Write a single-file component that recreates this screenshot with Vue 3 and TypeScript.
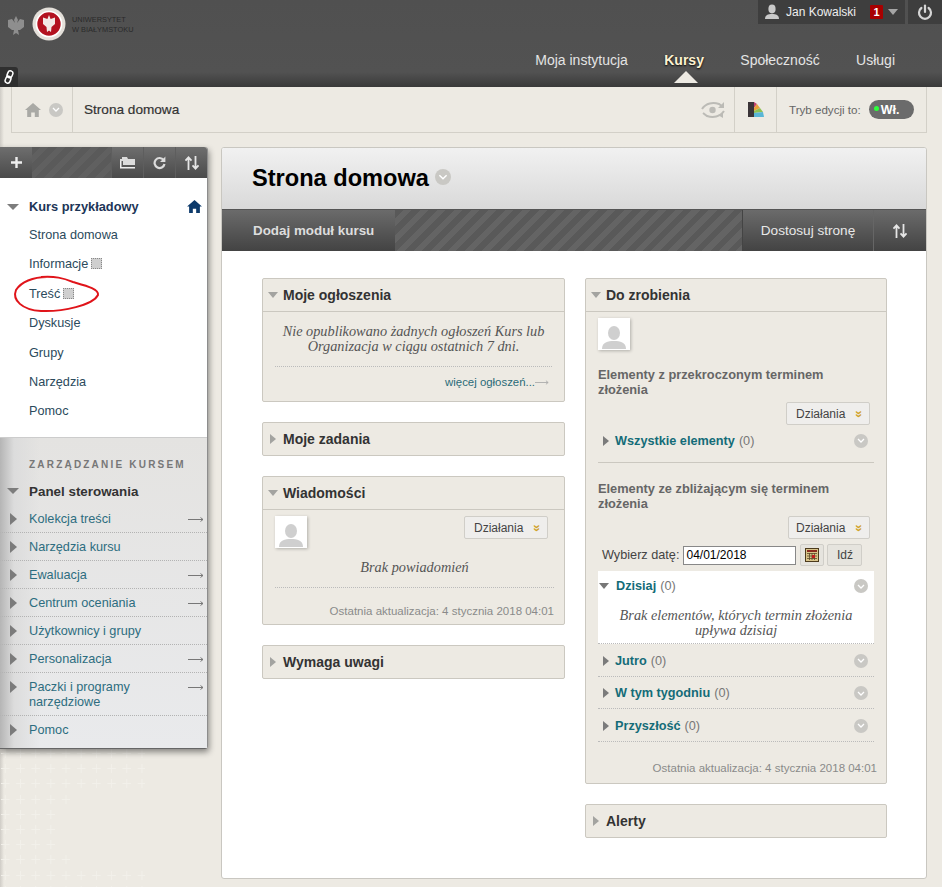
<script setup lang="ts">
interface ManageItem {
  label: string
  arrow: boolean
}

const courseLinks = [
  { label: "Strona domowa", badge: false },
  { label: "Informacje", badge: true },
  { label: "Treść", badge: true },
  { label: "Dyskusje", badge: false },
  { label: "Grupy", badge: false },
  { label: "Narzędzia", badge: false },
  { label: "Pomoc", badge: false }
];

const manageItems: ManageItem[] = [
  { label: "Kolekcja treści", arrow: true },
  { label: "Narzędzia kursu", arrow: false },
  { label: "Ewaluacja", arrow: true },
  { label: "Centrum oceniania", arrow: true },
  { label: "Użytkownicy i grupy", arrow: false },
  { label: "Personalizacja", arrow: true },
  { label: "Paczki i programy narzędziowe", arrow: true },
  { label: "Pomoc", arrow: false }
];

const navItems = ["Moja instytucja", "Kursy", "Społeczność", "Usługi"];
const laterRows = ["Jutro", "W tym tygodniu", "Przyszłość"];

// widths of the fading plus pattern under the side menu
const plusRows = [145, 145, 145, 70, 55, 55, 55, 70, 145, 145];
</script>

<template>
  <div class="page">
    <header class="topbar">
      <div class="logo">
        <svg class="eagle" width="18" height="22" viewBox="0 0 18 22">
          <path d="M9 1 L11 5 L10 8 L13 4 L17 5 L17 12 L13 15 L11 15 L12 20 L9 18 L6 20 L7 15 L5 15 L1 12 L1 5 L5 4 L8 8 L7 5 Z" fill="#8e8e8e" />
        </svg>
        <svg class="seal" width="34" height="34" viewBox="0 0 34 34">
          <circle cx="17" cy="17" r="16.5" fill="#e4e0da" />
          <circle cx="17" cy="17" r="12.5" fill="#b31220" stroke="#fff" stroke-width="1.6" />
          <path d="M17 8 L18.6 12 L23 10.5 L23 17 L19.5 20 L19 25 L17 23.5 L15 25 L14.5 20 L11 17 L11 10.5 L15.4 12 Z" fill="#f3e9e6" />
        </svg>
        <div class="logo-text">UNIWERSYTET<br>W BIAŁYMSTOKU</div>
      </div>
      <div class="top-right">
        <div class="account">
          <div class="userbox">
            <svg width="16" height="16" viewBox="0 0 16 16">
              <ellipse cx="8" cy="5" rx="3.6" ry="4.4" fill="#c9c9c9" />
              <path d="M1 15 C1 11 4 10 8 10 C12 10 15 11 15 15 Z" fill="#c9c9c9" />
            </svg>
            <span class="username">Jan Kowalski</span>
            <span class="count">1</span>
            <span class="user-caret"></span>
          </div>
          <div class="powerbox">
            <svg width="16" height="16" viewBox="0 0 16 16" fill="none" stroke="#d6d6d6" stroke-width="2.2" stroke-linecap="round">
              <path d="M8 1.5 V8" />
              <path d="M4.4 4 A6 6 0 1 0 11.6 4" />
            </svg>
          </div>
        </div>
        <nav class="mainnav">
          <a v-for="item in navItems" :key="item" :class="['navlink', { active: item === 'Kursy' }]">{{ item }}</a>
        </nav>
      </div>
      <div class="linktab">
        <svg width="12" height="14" viewBox="0 0 12 14" fill="none" stroke="#fff" stroke-width="1.5">
          <rect x="4.6" y="0.8" width="5" height="7" rx="2.4" transform="rotate(22 7 4)" />
          <rect x="2.4" y="6.2" width="5" height="7" rx="2.4" transform="rotate(22 5 10)" />
        </svg>
      </div>
    </header>

    <div class="crumbs">
      <div class="crumb-home">
        <svg width="16" height="14" viewBox="0 0 16 14">
          <path d="M8 0 L16 7 L13.8 7 L13.8 14 L9.8 14 L9.8 9.5 L6.2 9.5 L6.2 14 L2.2 14 L2.2 7 L0 7 Z" fill="#a9a9a5" />
        </svg>
        <span class="chev"><svg width="8" height="5" viewBox="0 0 8 5"><path d="M1 1 L4 4 L7 1" fill="none" stroke="#fff" stroke-width="1.3" /></svg></span>
      </div>
      <div class="crumb-title">Strona domowa</div>
      <div class="crumb-tool">
        <svg width="26" height="20" viewBox="0 0 26 20" fill="none" stroke="#bcbbb6" stroke-width="2">
          <path d="M2 9 C6 3 13 2 19 4 L23 7" />
          <path d="M24 11 C20 17 13 18 7 16 L3 13" />
          <circle cx="12.5" cy="10" r="3.2" fill="#bcbbb6" stroke="none" />
          <path d="M24 2 V8 H18 Z" fill="#bcbbb6" stroke="none" />
          <path d="M23 13 V18 L18 15 Z" fill="#bcbbb6" stroke="none" />
        </svg>
      </div>
      <div class="crumb-palette">
        <svg width="16" height="15" viewBox="0 0 16 15">
          <rect x="0" y="0" width="6" height="15" fill="#3b3438" />
          <path d="M6 0 L9 2 L6 6 Z" fill="#c2436e" />
          <path d="M6 6 L9 2 L12 6 L6 9 Z" fill="#e8a13a" />
          <path d="M6 9 L12 6 L15 10 L6 11 Z" fill="#8cc152" />
          <path d="M6 11 L15 10 L16 15 L6 15 Z" fill="#59b6d6" />
        </svg>
      </div>
      <div class="crumb-edit">
        <span>Tryb edycji to:</span>
        <span class="toggle"><i class="led"></i>Wł.</span>
      </div>
    </div>

    <div class="body-row">
      <div class="side-col">
        <aside class="sidemenu">
          <div class="side-tools">
            <span class="tool plus">
              <svg width="11" height="11" viewBox="0 0 11 11"><path d="M5.5 0 V11 M0 5.5 H11" stroke="#eee" stroke-width="2.4" /></svg>
            </span>
            <span class="tool-stripes"></span>
            <span class="tool">
              <svg width="16" height="13" viewBox="0 0 16 13">
                <path d="M0 3 H2 V1 H7 L8 3 H15 V9 H3 V5 H0 Z" fill="#dcdcdc" />
                <path d="M0 5 H1.5 V11 H15 V12.5 H0 Z" fill="#eee" />
              </svg>
            </span>
            <span class="tool">
              <svg width="13" height="14" viewBox="0 0 13 14" fill="none">
                <path d="M10.6 4 A5 5 0 1 0 11.5 8" stroke="#dcdcdc" stroke-width="2.2" />
                <path d="M12.4 0.5 V6 H7 Z" fill="#dcdcdc" />
              </svg>
            </span>
            <span class="tool">
              <svg width="14" height="14" viewBox="0 0 14 14" fill="none" stroke="#e6e6e6" stroke-width="1.8">
                <path d="M3.5 14 V2 M0.5 4.6 L3.5 1.4 L6.5 4.6" />
                <path d="M10.5 0 V12 M7.5 9.4 L10.5 12.6 L13.5 9.4" />
              </svg>
            </span>
          </div>

          <div class="course">
            <div class="course-head">
              <span class="tri-down big"></span>
              <span class="course-name">Kurs przykładowy</span>
              <svg class="course-home" width="15" height="13" viewBox="0 0 16 14">
                <path d="M8 0 L16 7 L13.8 7 L13.8 14 L9.8 14 L9.8 9.5 L6.2 9.5 L6.2 14 L2.2 14 L2.2 7 L0 7 Z" fill="#0d3a6b" />
              </svg>
            </div>
            <a v-for="link in courseLinks" :key="link.label" class="course-link">
              {{ link.label }}<i v-if="link.badge" class="badge"></i>
            </a>
          </div>

          <div class="manage">
            <div class="manage-title">ZARZĄDZANIE KURSEM</div>
            <div class="panel-head">
              <span class="tri-down big"></span>
              <span>Panel sterowania</span>
            </div>
            <div v-for="item in manageItems" :key="item.label" class="manage-row">
              <span class="tri-right dark"></span>
              <a class="manage-link">{{ item.label }}</a>
              <svg v-if="item.arrow" class="thin-arrow" width="16" height="5" viewBox="0 0 16 5" fill="none" stroke="#777">
                <path d="M0 2.5 H15 M12.5 0.5 L15 2.5 L12.5 4.5" />
              </svg>
            </div>
          </div>

          <svg class="ink-mark" width="90" height="38" viewBox="0 0 90 38" fill="none">
            <path d="M36 2 C22 2 10 7 5 15 C1 25 11 35 30 36 C52 37 82 30 87 20 C88 14 76 11 62 7 C52 3 44 1 30 2" stroke="#e0141a" stroke-width="2" />
          </svg>
        </aside>
        <div class="plus-field">
          <div v-for="(w, i) in plusRows" :key="i" class="plus-row" :style="{ width: w + 'px' }"></div>
        </div>
      </div>

      <main class="content">
        <div class="title-band">
          <h1>Strona domowa</h1>
          <span class="chev large"><svg width="10" height="6" viewBox="0 0 8 5"><path d="M1 1 L4 4 L7 1" fill="none" stroke="#fff" stroke-width="1.2" /></svg></span>
        </div>
        <div class="action-bar">
          <a class="action add">Dodaj moduł kursu</a>
          <span class="action-stripes"></span>
          <a class="action custom">Dostosuj stronę</a>
          <a class="action sort">
            <svg width="14" height="14" viewBox="0 0 14 14" fill="none" stroke="#e6e6e6" stroke-width="1.8">
              <path d="M3.5 14 V2 M0.5 4.6 L3.5 1.4 L6.5 4.6" />
              <path d="M10.5 0 V12 M7.5 9.4 L10.5 12.6 L13.5 9.4" />
            </svg>
          </a>
        </div>

        <div class="columns">
          <div class="column">
            <section class="module">
              <div class="mod-head open"><span class="tri-down"></span>Moje ogłoszenia</div>
              <div class="mod-body notes">
                <p class="serif-note">Nie opublikowano żadnych ogłoszeń Kurs lub Organizacja w ciągu ostatnich 7 dni.</p>
                <div class="more-row">
                  <a class="more">więcej ogłoszeń...</a>
                  <svg width="14" height="5" viewBox="0 0 16 5" fill="none" stroke="#aaa"><path d="M0 2.5 H15 M12.5 0.5 L15 2.5 L12.5 4.5" /></svg>
                </div>
              </div>
            </section>

            <section class="module">
              <div class="mod-head"><span class="tri-right"></span>Moje zadania</div>
            </section>

            <section class="module">
              <div class="mod-head open"><span class="tri-down"></span>Wiadomości</div>
              <div class="mod-body messages">
                <div class="msg-top">
                  <div class="avatar">
                    <svg width="26" height="26" viewBox="0 0 26 26">
                      <ellipse cx="13" cy="9" rx="6" ry="7" fill="#cfcfcf" />
                      <path d="M1 25 C1 18 7 17 13 17 C19 17 25 18 25 25 Z" fill="#cfcfcf" />
                    </svg>
                  </div>
                  <button class="actions-btn">Działania<span class="dbl">»</span></button>
                </div>
                <p class="serif-note one">Brak powiadomień</p>
                <div class="updated">Ostatnia aktualizacja: 4 stycznia 2018 04:01</div>
              </div>
            </section>

            <section class="module">
              <div class="mod-head"><span class="tri-right"></span>Wymaga uwagi</div>
            </section>
          </div>

          <div class="column">
            <section class="module">
              <div class="mod-head open"><span class="tri-down"></span>Do zrobienia</div>
              <div class="mod-body todo">
                <div class="avatar">
                  <svg width="26" height="26" viewBox="0 0 26 26">
                    <ellipse cx="13" cy="9" rx="6" ry="7" fill="#cfcfcf" />
                    <path d="M1 25 C1 18 7 17 13 17 C19 17 25 18 25 25 Z" fill="#cfcfcf" />
                  </svg>
                </div>
                <h4 class="todo-head first">Elementy z przekroczonym terminem złożenia</h4>
                <div class="btn-line"><button class="actions-btn">Działania<span class="dbl">»</span></button></div>
                <div class="todo-row all">
                  <span class="tri-right dark"></span>
                  <a class="todo-link">Wszystkie elementy</a><span class="zero">(0)</span>
                  <span class="chev end"><svg width="8" height="5" viewBox="0 0 8 5"><path d="M1 1 L4 4 L7 1" fill="none" stroke="#fff" stroke-width="1.3" /></svg></span>
                </div>
                <h4 class="todo-head">Elementy ze zbliżającym się terminem złożenia</h4>
                <div class="btn-line"><button class="actions-btn narrow">Działania<span class="dbl">»</span></button></div>
                <div class="date-line">
                  <label>Wybierz datę:</label>
                  <input class="date-input" value="04/01/2018" readonly>
                  <button class="small-btn cal">
                    <svg width="14" height="14" viewBox="0 0 14 14">
                      <rect x="0.5" y="0.5" width="13" height="13" fill="#d9c48a" stroke="#4d3b1d" />
                      <rect x="2" y="2" width="10" height="2" fill="#8a2b1e" />
                      <path d="M2 5.5 H12 M2 8 H12 M2 10.5 H12 M4.5 5 V12 M7 5 V12 M9.5 5 V12" stroke="#5a4a2a" stroke-width="0.8" />
                      <rect x="7" y="7" width="3" height="3" fill="#c11e1e" />
                    </svg>
                  </button>
                  <button class="small-btn go">Idź</button>
                </div>
                <div class="today">
                  <div class="today-head">
                    <span class="tri-down mid"></span>
                    <a class="todo-link">Dzisiaj</a><span class="zero">(0)</span>
                    <span class="chev end"><svg width="8" height="5" viewBox="0 0 8 5"><path d="M1 1 L4 4 L7 1" fill="none" stroke="#fff" stroke-width="1.3" /></svg></span>
                  </div>
                  <p class="serif-note today-note">Brak elementów, których termin złożenia upływa dzisiaj</p>
                </div>
                <div v-for="row in laterRows" :key="row" class="todo-row later">
                  <span class="tri-right dark"></span>
                  <a class="todo-link">{{ row }}</a><span class="zero">(0)</span>
                  <span class="chev end"><svg width="8" height="5" viewBox="0 0 8 5"><path d="M1 1 L4 4 L7 1" fill="none" stroke="#fff" stroke-width="1.3" /></svg></span>
                </div>
                <div class="updated todo-updated">Ostatnia aktualizacja: 4 stycznia 2018 04:01</div>
              </div>
            </section>

            <section class="module">
              <div class="mod-head"><span class="tri-right"></span>Alerty</div>
            </section>
          </div>
        </div>
      </main>
    </div>
  </div>
</template>

<style>
html, body {
  margin: 0;
  overflow: hidden;
  background: #edeae3;
}
</style>

<style scoped>
.page {
  position: relative;
  width: 942px;
  height: 887px;
  overflow: hidden;
  font-family: "Liberation Sans", Arial, sans-serif;
  background: linear-gradient(90deg, #cfccc6 0, #edeae3 4px);
}

p, h1, h4 { margin: 0; }

/* top bar */
.topbar {
  position: relative;
  height: 87px;
  display: flex;
  justify-content: space-between;
  background: linear-gradient(180deg, #505050 0, #525252 72px, #3a3a3a 87px);
}
.logo {
  display: flex;
  align-items: flex-start;
  padding: 7px 0 0 7px;
}
.eagle { margin-top: 8px; }
.seal { margin-left: 7px; }
.logo-text {
  margin: 8px 0 0 6px;
  font-size: 7.4px;
  line-height: 10px;
  color: #2a2a2a;
}
.top-right {
  display: flex;
  flex-direction: column;
  align-items: flex-end;
}
.account { display: flex; gap: 3px; }
.userbox {
  width: 147px;
  height: 24px;
  box-sizing: border-box;
  padding-left: 6px;
  display: flex;
  align-items: center;
  background: #3e3e3e;
}
.username {
  margin-left: 6px;
  font-size: 12px;
  color: #eee;
}
.count {
  width: 13px;
  height: 14px;
  margin-left: 14px;
  background: #a80000;
  border-radius: 1px;
  color: #fff;
  font-size: 11px;
  font-weight: 700;
  line-height: 14px;
  text-align: center;
}
.user-caret {
  margin-left: 5px;
  border-left: 5px solid transparent;
  border-right: 5px solid transparent;
  border-top: 6px solid #a5a5a5;
}
.powerbox {
  width: 34px;
  height: 24px;
  display: flex;
  align-items: center;
  justify-content: center;
  background: #3e3e3e;
}
.mainnav {
  display: flex;
  gap: 36.4px;
  padding: 28px 47px 0 0;
}
.navlink {
  position: relative;
  font-size: 14px;
  line-height: 16px;
  color: #e4e4e4;
}
.navlink.active {
  font-weight: 700;
  color: #fdf3d2;
  text-shadow: 0 1px 2px #000;
}
.navlink.active::after {
  content: "";
  position: absolute;
  left: 10px;
  top: 19px;
  border-left: 12px solid transparent;
  border-right: 12px solid transparent;
  border-bottom: 12px solid #edeae3;
}
.linktab {
  position: absolute;
  left: 0;
  bottom: 0;
  width: 18px;
  height: 20px;
  display: flex;
  align-items: center;
  justify-content: center;
  background: #2f2f2f;
  border-top-right-radius: 3px;
}

/* breadcrumb strip */
.crumbs {
  width: 916px;
  height: 46px;
  margin-left: 11px;
  box-sizing: border-box;
  display: flex;
  align-items: stretch;
  background: #edeae3;
  border: 1px solid #d3d0c8;
  border-top: 0;
}
.crumb-home {
  width: 61px;
  box-sizing: border-box;
  padding-left: 13px;
  display: flex;
  align-items: center;
  gap: 8px;
  border-right: 1px solid #d3d0c8;
}
.chev {
  flex: none;
  width: 14px;
  height: 14px;
  display: inline-flex;
  align-items: center;
  justify-content: center;
  border-radius: 50%;
  background: #c9c8c4;
}
.chev.large { width: 16px; height: 16px; margin: 5px 0 0 6px; }
.chev.end { margin-left: auto; margin-right: 6px; }
.crumb-title {
  flex: 1;
  padding-left: 11px;
  line-height: 45px;
  font-size: 13.6px;
  color: #333;
  -webkit-text-stroke: 0.2px #333;
}
.crumb-tool {
  width: 32px;
  padding-right: 8px;
  display: flex;
  align-items: center;
  justify-content: flex-end;
}
.crumb-palette {
  width: 41px;
  display: flex;
  align-items: center;
  justify-content: center;
  border-left: 1px solid #d3d0c8;
  border-right: 1px solid #d3d0c8;
}
.crumb-edit {
  width: 149px;
  box-sizing: border-box;
  padding-left: 12px;
  display: flex;
  align-items: center;
  gap: 8px;
  font-size: 11.6px;
  color: #666;
}
.toggle {
  width: 45px;
  height: 19px;
  box-sizing: border-box;
  padding-left: 5px;
  display: flex;
  align-items: center;
  gap: 2px;
  border-radius: 10px;
  background: #6b6b6b;
  color: #fff;
  font-size: 12.5px;
  font-weight: 700;
}
.led {
  width: 5px;
  height: 5px;
  margin-top: -3px;
  border-radius: 50%;
  background: #2dff3c;
}

/* page body */
.body-row {
  display: flex;
  gap: 13px;
  padding-top: 14px;
}
.side-col { width: 208px; flex: none; }
.sidemenu {
  position: relative;
  height: 602px;
  border-radius: 0 3px 3px 0;
  box-shadow: 1px 3px 6px rgba(0, 0, 0, 0.45);
  border-right: 1px solid #8d8d8d;
  border-bottom: 1px solid #666;
  box-sizing: border-box;
}
.side-tools {
  height: 31px;
  display: flex;
  background: linear-gradient(180deg, #6e6e6e 0, #4a4a4a 100%);
  border-radius: 0 3px 0 0;
}
.tool {
  width: 32px;
  flex: none;
  display: flex;
  align-items: center;
  justify-content: center;
  border-left: 1px solid #5e5e5e;
  box-sizing: border-box;
}
.tool.plus { border-left: 0; }
.tool-stripes {
  flex: 1;
  background: repeating-linear-gradient(135deg, #5a5a5a 0 6px, #606060 6px 12px);
}
.course {
  height: 260px;
  box-sizing: border-box;
  padding-top: 14px;
  background: #fff;
  border-bottom: 1px solid #ccc;
}
.course-head {
  height: 29px;
  display: flex;
  align-items: center;
  padding-left: 7px;
  font-size: 12.8px;
  font-weight: 700;
  color: #1c3557;
}
.course-name { margin-left: 10px; }
.course-home { margin-left: auto; margin-right: 5px; }
.course-link {
  display: block;
  height: 29.4px;
  padding-left: 29px;
  line-height: 29px;
  font-size: 12.7px;
  color: #2b4a5c;
}
.badge {
  display: inline-block;
  width: 9px;
  height: 9px;
  margin-left: 3px;
  vertical-align: -1px;
  background: #cfcfcf;
  border: 1px dotted #888;
}
.manage {
  height: 310px;
  box-sizing: border-box;
  padding-top: 21px;
  background:
    linear-gradient(90deg, #b5b5b5 0, #dcdcdc 14px, rgba(233, 234, 236, 0) 40px),
    linear-gradient(180deg, #e4e3e1, #e9eaec);
}
.manage-title {
  padding-left: 29px;
  font-size: 10px;
  font-weight: 700;
  line-height: 12px;
  letter-spacing: 2.2px;
  color: #777;
}
.panel-head {
  height: 22px;
  margin: 9px 0 3px;
  display: flex;
  align-items: center;
  gap: 10px;
  padding-left: 7px;
  font-size: 13.4px;
  font-weight: 700;
  color: #333;
}
.manage-row {
  display: flex;
  align-items: flex-start;
  min-height: 28px;
  box-sizing: border-box;
  padding: 7px 0 5px;
  border-bottom: 1px dotted #b3b3b3;
}
.manage-row:last-child { border-bottom: 0; }
.manage-row .tri-right {
  margin: 1px 0 0 10px;
  border-top-width: 6.5px;
  border-bottom-width: 6.5px;
  border-left-width: 7px;
}
.manage-link {
  width: 125px;
  margin-left: 12px;
  font-size: 12.7px;
  line-height: 15px;
  color: #2d6d80;
}
.thin-arrow {
  margin: 5px 3px 0 auto;
}
.ink-mark {
  position: absolute;
  left: 11px;
  top: 128px;
}
.tri-down {
  flex: none;
  display: inline-block;
  border-left: 5px solid transparent;
  border-right: 5px solid transparent;
  border-top: 6px solid #a3a3a0;
}
.tri-down.big {
  border-left-width: 6px;
  border-right-width: 6px;
  border-top: 6px solid #7d7d7d;
}
.tri-down.mid {
  border-left-width: 5.5px;
  border-right-width: 5.5px;
  border-top: 6px solid #777;
}
.tri-right {
  flex: none;
  display: inline-block;
  border-top: 5.5px solid transparent;
  border-bottom: 5.5px solid transparent;
  border-left: 6px solid #a3a3a0;
}
.tri-right.dark { border-left-color: #7b7b7b; }
.plus-row {
  height: 15.2px;
  background-image:
    linear-gradient(90deg, #f2f0ea 0 9px, transparent 9px),
    linear-gradient(90deg, transparent 4px, #f2f0ea 4px 5px, transparent 5px);
  background-repeat: repeat-x;
  background-size: 15.2px 1px, 15.2px 9px;
  background-position: 1px 4px, 1px 0;
}

/* main card */
.content {
  width: 706px;
  height: 732px;
  box-sizing: border-box;
  background: #fff;
  border: 1px solid #c9c7c1;
  border-radius: 3px;
  overflow: hidden;
}
.title-band {
  height: 62px;
  box-sizing: border-box;
  padding: 16px 0 0 30px;
  display: flex;
  align-items: flex-start;
  background: linear-gradient(180deg, #f1f1f1, #d9d9d9);
  border-bottom: 1px solid #555;
}
h1 {
  font-size: 23.6px;
  line-height: 28px;
  font-weight: 700;
  color: #000;
}
.action-bar {
  height: 41px;
  display: flex;
  background: #555;
  font-size: 13.6px;
  color: #e8e8e8;
}
.action {
  display: flex;
  align-items: center;
  justify-content: center;
  background: linear-gradient(180deg, #6b6b6b, #434343);
}
.action.add {
  width: 173px;
  box-sizing: border-box;
  padding-left: 31px;
  justify-content: flex-start;
  font-size: 13.4px;
  font-weight: 700;
  color: #ddd;
}
.action-stripes {
  flex: 1;
  background: repeating-linear-gradient(135deg, #595959 0 6px, #646464 6px 12px);
}
.action.custom {
  width: 131px;
  border-left: 1px solid #444;
  box-sizing: border-box;
}
.action.sort {
  width: 53px;
  border-left: 1px solid #666;
  box-sizing: border-box;
}
.columns {
  display: flex;
  gap: 20px;
  padding: 27px 0 0 40px;
}
.column {
  width: 303px;
  display: flex;
  flex-direction: column;
  gap: 20px;
}
.column + .column { width: 302px; }
.module {
  background: #edeae3;
  border: 1px solid #cbc8c0;
  border-radius: 2px;
}
.mod-head {
  height: 32px;
  box-sizing: border-box;
  padding-left: 5px;
  display: flex;
  align-items: center;
  gap: 5px;
  font-size: 14px;
  font-weight: 700;
  color: #333;
}
.mod-head.open { border-bottom: 1px solid #cbc8c0; height: 33px; }
.mod-head .tri-right { margin: 0 2px 0 2px; }
.mod-body { box-sizing: border-box; }
.serif-note {
  font-family: "Liberation Serif", "Times New Roman", serif;
  font-style: italic;
  font-size: 14.3px;
  line-height: 15px;
  color: #555;
  text-align: center;
}
.notes {
  height: 89px;
  padding: 12px 12px 0;
}
.notes .serif-note {
  padding-bottom: 12px;
  border-bottom: 1px dotted #bbb;
}
.more-row {
  display: flex;
  justify-content: flex-end;
  align-items: center;
  padding: 9px 3px 0 0;
  font-size: 11.4px;
  color: #2a6b78;
}
.avatar {
  width: 32px;
  height: 32px;
  display: flex;
  align-items: flex-end;
  justify-content: center;
  background: #fff;
  box-shadow: 1px 1px 3px rgba(0, 0, 0, 0.25);
}
.actions-btn {
  width: 84px;
  height: 23px;
  padding: 0 7px 0 9px;
  display: inline-flex;
  align-items: center;
  justify-content: space-between;
  background: #efeeec;
  border: 1px solid #d0cec8;
  border-radius: 2px;
  font-family: "Liberation Sans", Arial, sans-serif;
  font-size: 12px;
  color: #444;
}
.actions-btn.narrow { width: 82px; padding-left: 7px; }
.dbl {
  display: inline-block;
  transform: rotate(90deg);
  font-size: 13px;
  font-weight: 700;
  line-height: 10px;
  color: #d0a32c;
}
.messages {
  height: 114px;
  padding: 6px 10px 0 12px;
}
.msg-top {
  display: flex;
  justify-content: space-between;
  align-items: flex-start;
  padding-right: 6px;
}
.serif-note.one {
  margin-top: 12px;
  padding-bottom: 12px;
  border-bottom: 1px dotted #bbb;
}
.updated {
  padding-top: 16px;
  font-size: 11.5px;
  line-height: 14px;
  text-align: right;
  color: #8a8a8a;
}
.todo {
  height: 471px;
  padding: 6px 9px 0 12px;
}
.todo-head {
  max-width: 240px;
  font-size: 12.8px;
  line-height: 15px;
  font-weight: 700;
  color: #666;
}
.todo-head.first { margin-top: 17px; }
.btn-line {
  display: flex;
  justify-content: flex-end;
  padding: 5px 7px 0 0;
}
.todo-row {
  height: 32px;
  display: flex;
  align-items: center;
  padding-left: 5px;
  font-size: 12.7px;
}
.todo-row.all {
  height: 38px;
  box-sizing: border-box;
  padding-bottom: 6px;
  margin-right: 3px;
  margin-bottom: 18px;
  border-bottom: 1px solid #cbc8c0;
}
.todo-row.later {
  height: 32.5px;
  box-sizing: border-box;
  padding-top: 2px;
  margin-right: 3px;
  border-bottom: 1px dotted #bbb;
}
.todo-link {
  margin-left: 6px;
  font-weight: 700;
  color: #146c78;
}
.zero {
  margin-left: 4px;
  color: #777;
}
.date-line {
  height: 32px;
  display: flex;
  align-items: center;
  padding-left: 4px;
  font-size: 12.7px;
  color: #444;
}
.date-input {
  width: 113px;
  height: 19px;
  box-sizing: border-box;
  margin-left: 4px;
  padding: 0 2px;
  border: 1px solid #888;
  background: #fff;
  font-family: "Liberation Sans", Arial, sans-serif;
  font-size: 12px;
  color: #000;
}
.small-btn {
  height: 22px;
  margin-left: 4px;
  padding: 0;
  display: inline-flex;
  align-items: center;
  justify-content: center;
  background: #e6e4de;
  border: 1px solid #d0cec8;
  border-radius: 2px;
  font-family: "Liberation Sans", Arial, sans-serif;
  font-size: 12px;
  color: #444;
}
.small-btn.cal { width: 24px; }
.small-btn.go { width: 35px; margin-left: 3px; }
.today {
  height: 73px;
  box-sizing: border-box;
  margin-right: 3px;
  background: #fff;
  border-bottom: 1px dotted #bbb;
}
.today-head {
  height: 30px;
  display: flex;
  align-items: center;
  padding-left: 1px;
  font-size: 12.7px;
}
.today-head .tri-down { margin-right: 1px; }
.today-note { padding: 7px 12px 0; }
.todo-updated { padding-top: 19px; }
</style>
